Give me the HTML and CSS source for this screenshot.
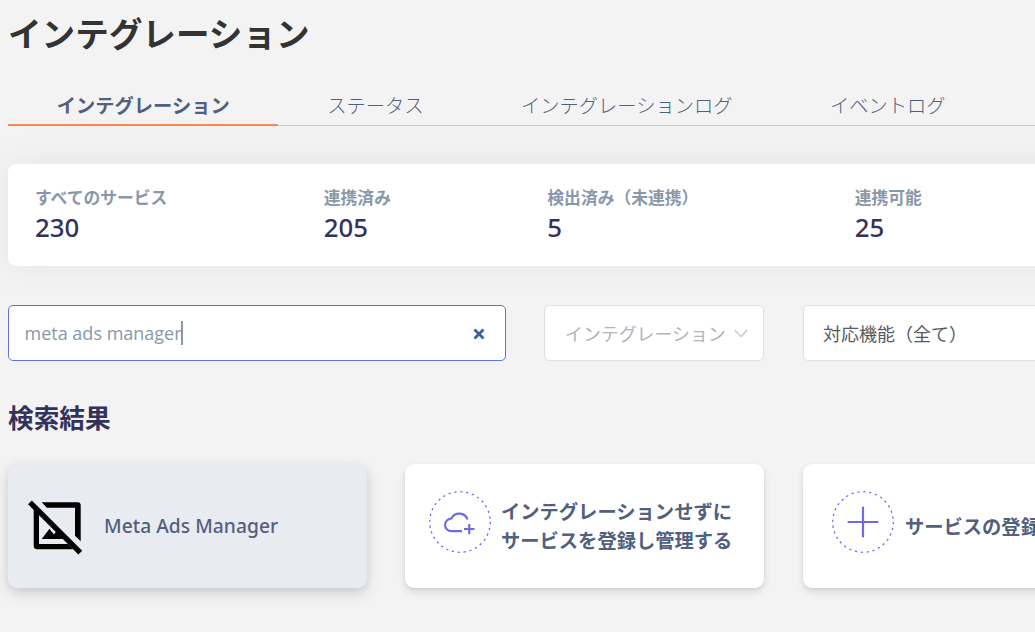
FILE: index.html
```html
<!DOCTYPE html>
<html lang="ja">
  <head>
    <meta charset="UTF-8" />
    <meta name="viewport" content="width=device-width, initial-scale=1.0" />
    <title>インテグレーション</title>
    <link rel="stylesheet" href="styles.css">
  </head>
  <body>
    <main class="page">
      <h1>インテグレーション</h1>
      <nav class="tabs">
        <a class="tab active">インテグレーション</a>
        <a class="tab">ステータス</a>
        <a class="tab">インテグレーションログ</a>
        <a class="tab">イベントログ</a>
      </nav>

      <section class="stats">
        <div class="stat">
          <div class="stat-label">すべてのサービス</div>
          <div class="stat-value">230</div>
        </div>
        <div class="stat">
          <div class="stat-label">連携済み</div>
          <div class="stat-value">205</div>
        </div>
        <div class="stat">
          <div class="stat-label">検出済み（未連携）</div>
          <div class="stat-value">5</div>
        </div>
        <div class="stat">
          <div class="stat-label">連携可能</div>
          <div class="stat-value">25</div>
        </div>
      </section>

      <div class="filters">
        <div class="field search">
          <span class="search-text">meta ads manager</span><span class="caret"></span>
          <svg class="clear" width="14" height="14" viewBox="0 0 14 14">
            <path d="M2.5 2.5L11.5 11.5M11.5 2.5L2.5 11.5" />
          </svg>
        </div>
        <div class="field select">
          <span>インテグレーション</span>
          <svg class="chevron" width="14" height="9" viewBox="0 0 14 9">
            <path d="M.7 1L7 7.6L13.3 1" />
          </svg>
        </div>
        <div class="field features">対応機能（全て）</div>
      </div>

      <h2>検索結果</h2>
      <div class="results">
        <div class="card found">
          <svg class="no-image" width="56" height="56" viewBox="0 0 56 56">
            <path d="M13.7 2.3H49.7Q52.7 2.3 52.7 5.3V41.3L47 35.8V7.8H18.9Z" />
            <path d="M5.7 8L11 13V44H40L45 49.3H9.2Q5.7 49.3 5.7 45.8Z" />
            <path d="M13.7 39L21.5 28.7L26 34.5L28.2 31.2L37.5 39Z" />
            <path class="slash" d="M1.9 2.3L52.3 52.7" />
          </svg>
          <span class="card-title latin">Meta Ads Manager</span>
        </div>
        <div class="card manage">
          <svg class="round-icon" width="62" height="62" viewBox="0 0 62 62">
            <circle class="ring" cx="31" cy="31" r="30.3" />
            <path class="cloud" d="M33 40.2H22.5A6.4 6.4 0 0 1 16 34A6.7 6.7 0 0 1 22.5 27.5A8.7 8.7 0 0 1 38.5 28.5" />
            <path class="cloud" d="M35 38H45.5M40.3 33V43.3" />
          </svg>
          <span class="card-title">インテグレーションせずに<br>サービスを登録し管理する</span>
        </div>
        <div class="card register">
          <svg class="round-icon" width="62" height="62" viewBox="0 0 62 62">
            <circle class="ring" cx="31" cy="31" r="30.3" />
            <path class="plus" d="M16.5 31H45.5M31 16.5V45.5" />
          </svg>
          <span class="card-title">サービスの登録</span>
        </div>
      </div>
    </main>
  </body>
</html>
```

FILE: styles.css
```css
* {
  margin: 0;
  padding: 0;
  box-sizing: border-box;
}
body {
  font-family: "Open Sans", "Noto Sans CJK JP", sans-serif;
  background-color: #f3f3f3;
  color: #525f7f;
  height: 100vh;
  overflow: hidden;
}
.page {
  width: 1180px;
  padding-left: 8px;
}
h1 {
  height: 86px;
  padding-top: 9px;
  font-size: 33.6px;
  line-height: 50px;
  font-weight: 700;
  color: #333;
}
.tabs {
  display: flex;
  height: 40px;
  border-bottom: 1px solid #c8c8c8;
}
.tab {
  height: 40px;
  padding: 0 48.8px;
  font-size: 19.25px;
  line-height: 40px;
  font-weight: 300;
  white-space: nowrap;
}
.tab.active {
  font-weight: 700;
  border-bottom: 2px solid #fb8650;
}
.stats {
  display: flex;
  gap: 156.4px;
  height: 102px;
  margin-top: 38px;
  padding: 22px 27px;
  background-color: #fff;
  border-radius: 8px;
  box-shadow: 0 0 32px rgba(136, 152, 170, 0.15);
}
.stat {
  white-space: nowrap;
}
.stat-label {
  font-size: 16.8px;
  line-height: 24px;
  font-weight: 700;
  color: #8898aa;
}
.stat-value {
  font-family: "Noto Sans", "Open Sans", sans-serif;
  font-size: 25.8px;
  line-height: 34px;
  font-weight: 500;
  color: #32325d;
}
.filters {
  display: flex;
  margin-top: 39px;
}
.field {
  display: flex;
  align-items: center;
  height: 56px;
  font-size: 18px;
  background-color: #fff;
  border: 1px solid #dcdfe6;
  border-radius: 5px;
  white-space: nowrap;
}
.search {
  width: 498px;
  padding: 0 19px 0 15.5px;
  border-color: #5e72e4;
  color: #8898aa;
}
.caret {
  width: 2px;
  height: 24px;
  margin-left: -1px;
  background-color: #8898aa;
}
.clear {
  margin-top: 2px;
  margin-left: auto;
  fill: none;
  stroke: #3760a0;
  stroke-width: 2.8;
}
.select {
  width: 220px;
  margin-left: 38px;
  padding: 0 15px 0 20px;
  justify-content: space-between;
  font-size: 17.9px;
  color: #adb5bd;
}
.chevron {
  fill: none;
  stroke: #c0c4cc;
  stroke-width: 1.3;
}
.features {
  width: 360px;
  margin-left: 39px;
  padding-left: 19px;
  color: #555a60;
}
h2 {
  margin-top: 39px;
  font-size: 25.7px;
  line-height: 38px;
  font-weight: 700;
  color: #32325d;
}
.results {
  display: grid;
  grid-template-columns: repeat(3, 359px);
  gap: 38.4px;
  margin-top: 26px;
}
.card {
  display: flex;
  align-items: center;
  height: 124px;
  background-color: #fff;
  border-radius: 9px;
  box-shadow: 0 4px 7px rgba(50, 50, 93, 0.13), 0 1px 3px rgba(0, 0, 0, 0.08);
}
.found {
  padding-left: 20px;
  background-color: #e8ebef;
  box-shadow: 0 6px 16px rgba(50, 50, 93, 0.12), 0 3px 8px rgba(0, 0, 0, 0.09);
}
.manage {
  padding-left: 23.6px;
}
.register {
  padding-left: 29.2px;
}
.card-title {
  margin-left: 10px;
  font-size: 19.3px;
  line-height: 29px;
  font-weight: 600;
  white-space: nowrap;
}
.register .card-title {
  margin-left: 11px;
}
.latin {
  margin: -1px 0 0 20px;
  font-family: "Noto Sans", "Open Sans", sans-serif;
  font-size: 19.2px;
  font-weight: 500;
  letter-spacing: 0.05px;
}
.no-image {
  margin-top: 4px;
  fill: #000;
}
.slash {
  stroke: #000;
  stroke-width: 5.4;
}
.round-icon {
  flex: none;
  margin-top: -8px;
  fill: none;
  stroke: #7069e5;
}
.ring {
  stroke-width: 1.3;
  stroke-dasharray: 2.2 3.75;
}
.cloud {
  stroke-width: 2.2;
}
.plus {
  stroke-width: 2.2;
  stroke-linecap: round;
}
```
